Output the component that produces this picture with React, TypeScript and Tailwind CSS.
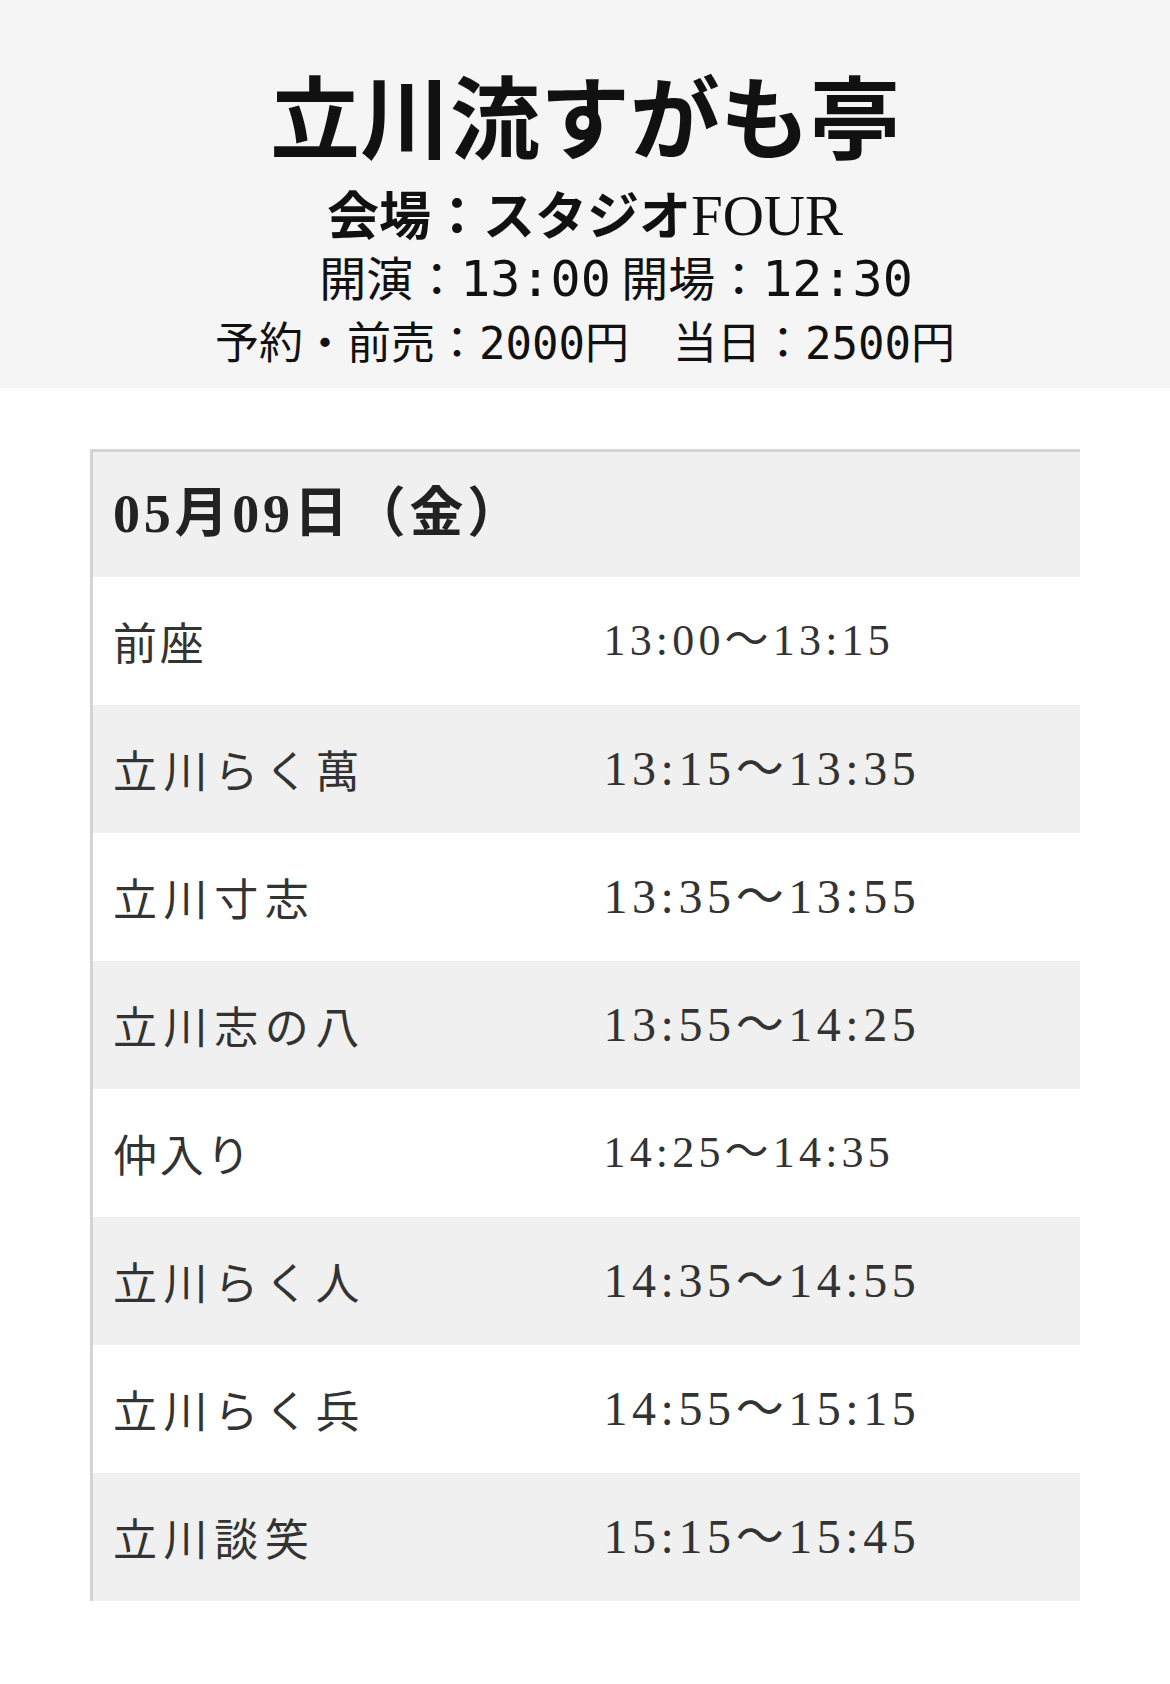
const serif = "font-['Liberation_Serif','Noto_Sans_CJK_JP',serif]";
const sans = "font-['Noto_Sans_CJK_JP',sans-serif]";
const mono = "font-['DejaVu_Sans_Mono','Noto_Sans_CJK_JP',monospace]";

const PROGRAM = [
  { name: "前座", time: "13:00〜13:15", main: false },
  { name: "立川らく萬", time: "13:15〜13:35", main: true },
  { name: "立川寸志", time: "13:35〜13:55", main: true },
  { name: "立川志の八", time: "13:55〜14:25", main: true },
  { name: "仲入り", time: "14:25〜14:35", main: false },
  { name: "立川らく人", time: "14:35〜14:55", main: true },
  { name: "立川らく兵", time: "14:55〜15:15", main: true },
  { name: "立川談笑", time: "15:15〜15:45", main: true },
];

export default function App() {
  return (
    <div className={`min-h-screen bg-white ${sans}`}>
      <header className="bg-[#f5f5f5] pt-[63px] pb-[18px] text-center text-[#111]">
        <h1 className="text-[90px] font-bold leading-[100px]">立川流すがも亭</h1>
        <p className="mt-[20px] text-[52px] font-bold leading-[60px]">
          会場：スタジオ
          <span className="font-['Liberation_Serif',serif] text-[57px] font-normal">FOUR</span>
        </p>
        <p className="mt-[2px] pl-[62px] text-[47px] leading-[56px]">
          開演：<span className={`${mono} text-[50px]`}>13:00</span> 開場：
          <span className={`${mono} text-[50px]`}>12:30</span>
        </p>
        <p className="mt-[7px] text-[44px] leading-[52px]">
          予約・前売：<span className={mono}>2000</span>円　当日：<span className={mono}>2500</span>円
        </p>
      </header>

      <div className="mx-[90px] mt-[61px] border-l-[3px] border-t-[3px] border-[#d4d4d4]">
        <div className="flex h-[125px] items-center bg-[#f0f0f0] px-[20px]">
          <span className={`${serif} text-[54px] font-bold tracking-[0.07em] text-[#222]`}>
            05月09日（金）
          </span>
        </div>
        {PROGRAM.map((row, i) => (
          <div
            key={row.name}
            className={`grid h-[128px] grid-cols-2 items-center text-[#333] ${
              i % 2 === 1 ? "bg-[#f0f0f0]" : "bg-white"
            }`}
          >
            <span
              className={`pl-[20px] text-[44px] ${
                row.main ? "tracking-[0.15em]" : "tracking-[0.06em]"
              }`}
            >
              {row.name}
            </span>
            <span
              className={`${serif} pl-[17px] tracking-[0.095em] ${
                row.main ? "text-[48px]" : "text-[44px]"
              }`}
            >
              {row.time}
            </span>
          </div>
        ))}
      </div>
    </div>
  );
}
